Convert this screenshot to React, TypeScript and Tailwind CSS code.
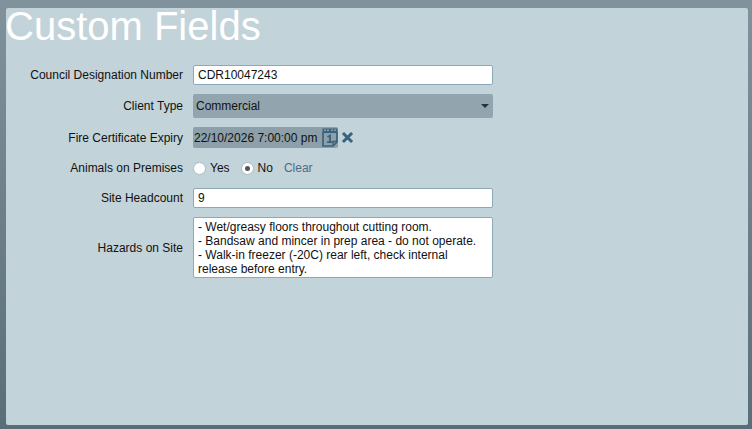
import React from 'react';

const labelClass = 'w-[177px] shrink-0 text-right text-[12px] text-[#111]';
const inputClass =
  'block w-[300px] h-5 rounded-[2px] border border-[#8fa8b8] bg-white px-1 text-[12px] text-[#111] outline-none';

const Row = ({ label, className, children }: { label: string; className?: string; children: React.ReactNode }) => (
  <div className={`flex items-center gap-[10px] ${className ?? ''}`}>
    <div className={labelClass}>{label}</div>
    {children}
  </div>
);

const CalendarIcon = () => (
  <svg width="16" height="19" viewBox="0 0 16 19" className="shrink-0">
    <path d="M0.5 0.5h15v4.5H0.5z" fill="#3a627d" />
    <path d="M3 1.5v1.5M6 1.5v1.5M10 1.5v1.5M13 1.5v1.5" stroke="#b9cad2" strokeWidth="1.2" />
    <path d="M1 4v14h10l4-4V4" fill="none" stroke="#3a627d" strokeWidth="1.7" />
    <path d="M11 17.5v-4h4" fill="none" stroke="#3a627d" strokeWidth="1.4" />
    <path d="M5.5 9l2.5-1.5v6.5M5 14.2h5.5" fill="none" stroke="#3a627d" strokeWidth="1.8" />
  </svg>
);

const Radio = ({ checked }: { checked?: boolean }) => (
  <span className="flex h-[13px] w-[13px] items-center justify-center rounded-full border border-[#a9bcc7] bg-white">
    {checked && <span className="h-[5px] w-[5px] rounded-full bg-[#555]" />}
  </span>
);

export default function App() {
  return (
    <div className="h-[429px] w-[752px] overflow-hidden bg-gradient-to-b from-[#80929b] to-[#5a6e79] pb-1 pl-[6px] pr-1 pt-2 font-['Liberation_Sans',Arial,sans-serif]">
      <div className="h-[417px] w-[742px] rounded-[2px] bg-[#c3d3da]">
        <h1 className="-ml-px h-[57px] text-[40px] leading-[36px] text-white">Custom Fields</h1>

        <Row label="Council Designation Number">
          <input className={inputClass} defaultValue="CDR10047243" />
        </Row>

        <Row label="Client Type" className="mt-[9px]">
          <div className="flex h-6 w-[300px] items-center justify-between rounded-[2px] bg-[#92a5ae] pl-[3px] pr-[3px] text-[12px] text-[#111]">
            <span>Commercial</span>
            <span className="mr-[1px] h-0 w-0 border-x-[4px] border-t-[4px] border-x-transparent border-t-[#1f3340]" />
          </div>
        </Row>

        <Row label="Fire Certificate Expiry" className="mt-[9px]">
          <div className="flex items-center gap-[3px]">
            <div className="flex h-[21px] w-[145px] items-center gap-[5px] rounded-[2px] bg-[#8d9fa8] pl-[1px] text-[12px] text-[#111]">
              <span className="whitespace-nowrap">22/10/2026 7:00:00 pm</span>
              <CalendarIcon />
            </div>
            <svg width="13" height="13" viewBox="0 0 12 12">
              <path d="M1.8 1.8l8.4 8.4M10.2 1.8l-8.4 8.4" stroke="#3a627d" strokeWidth="2.8" />
            </svg>
          </div>
        </Row>

        <Row label="Animals on Premises" className="mt-[12px] h-4">
          <div className="flex items-center text-[12px] text-[#111]">
            <Radio />
            <span className="ml-[4px]">Yes</span>
            <span className="ml-[11px]"><Radio checked /></span>
            <span className="ml-[4px]">No</span>
            <span className="ml-[11px] text-[#4b6d84]">Clear</span>
          </div>
        </Row>

        <Row label="Site Headcount" className="mt-[12px]">
          <input className={inputClass} defaultValue="9" />
        </Row>

        <Row label="Hazards on Site" className="mt-[9px]">
          <div className="h-[61px] w-[300px] rounded-[2px] border border-[#8fa8b8] bg-white px-1 py-[2px] text-[12px] leading-[14px] text-[#111]">
            <div>- Wet/greasy floors throughout cutting room.</div>
            <div>- Bandsaw and mincer in prep area - do not operate.</div>
            <div>- Walk-in freezer (-20C) rear left, check internal</div>
            <div>release before entry.</div>
          </div>
        </Row>
      </div>
    </div>
  );
}
